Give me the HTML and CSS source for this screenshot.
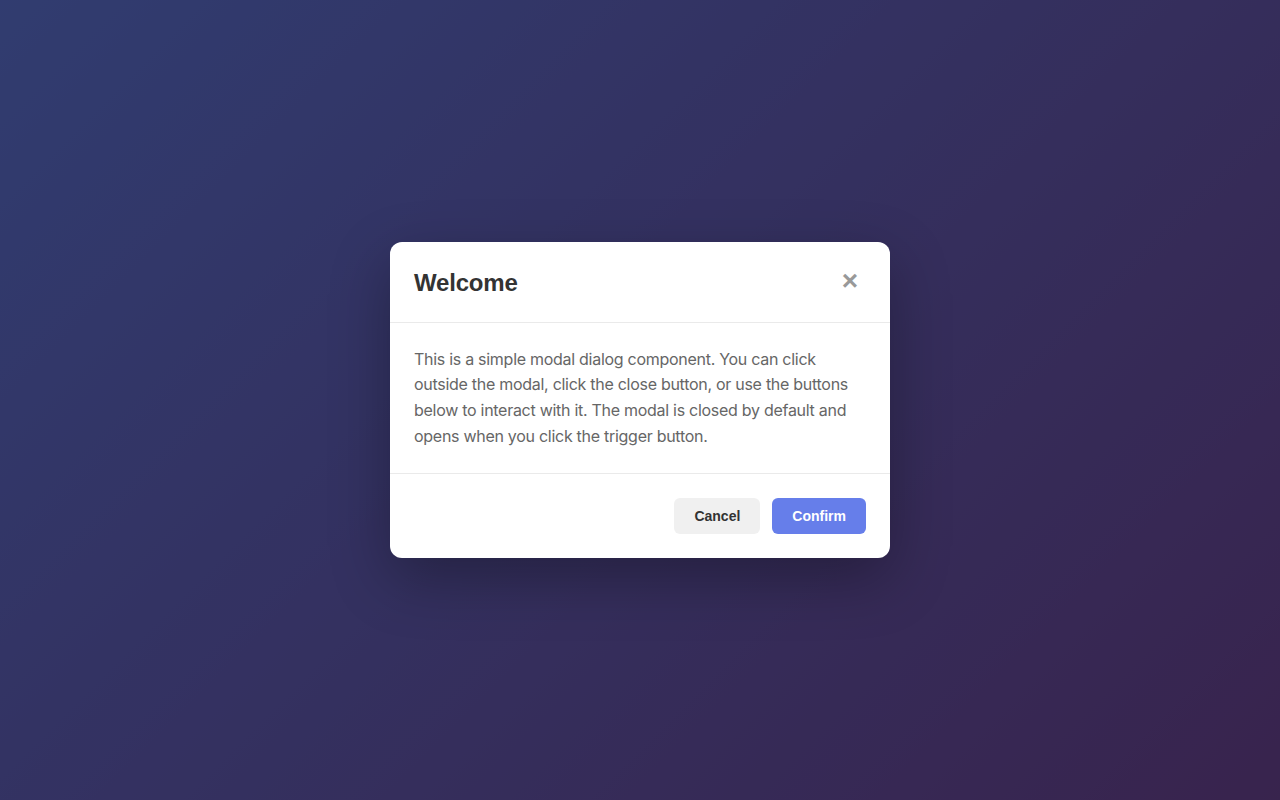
FILE: index.html
```html
<!DOCTYPE html>
<html lang="en">
<head>
<meta charset="utf-8">
<title>Modal</title>
<link rel="stylesheet" href="styles.css">
</head>
<body>
<div class="overlay">
  <div class="modal" role="dialog">
    <div class="modal-header">
      <h2 class="modal-title">Welcome</h2>
      <button class="close-btn" aria-label="Close">&times;</button>
    </div>
    <div class="modal-body">
      <p>This is a simple modal dialog component. You can click outside the modal, click the close button, or use the buttons below to interact with it. The modal is closed by default and opens when you click the trigger button.</p>
    </div>
    <div class="modal-footer">
      <button class="btn btn-cancel">Cancel</button>
      <button class="btn btn-confirm">Confirm</button>
    </div>
  </div>
</div>
</body>
</html>
```
FILE: styles.css
```css
* { box-sizing: border-box; }
html, body { margin: 0; height: 100%; }
body {
  font-family: Inter, "Liberation Sans", Arial, sans-serif;
  background: linear-gradient(135deg, #667eea 0%, #764ba2 100%);
}
.overlay {
  width: 100%;
  height: 100%;
  background: rgba(0, 0, 0, 0.52);
  display: flex;
  align-items: center;
  justify-content: center;
}
.modal {
  width: 500px;
  background: #fff;
  border-radius: 12px;
  box-shadow: 0 20px 60px rgba(0, 0, 0, 0.3);
  overflow: hidden;
}
.modal-header {
  display: flex;
  align-items: center;
  justify-content: space-between;
  padding: 24px;
  border-bottom: 1px solid #eaeaea;
}
.modal-title {
  margin: 0;
  padding-top: 1px;
  font-family: "Liberation Sans", Arial, sans-serif;
  font-size: 24px;
  line-height: 31px;
  font-weight: 700;
  color: #333;
  letter-spacing: -0.2px;
}
.close-btn {
  width: 32px;
  height: 30px;
  margin-bottom: 2px;
  border: 0;
  background: transparent;
  color: #999;
  font-size: 28px;
  line-height: 1;
  font-family: "Liberation Sans", Arial, sans-serif;
  font-weight: 700;
  padding: 0;
  display: flex;
  align-items: center;
  justify-content: center;
  cursor: pointer;
}
.modal-body {
  padding: 24px;
  border-bottom: 1px solid #eaeaea;
}
.modal-body p {
  margin: 0;
  font-size: 16px;
  line-height: 1.6;
  letter-spacing: -0.28px;
  color: #666;
}
.modal-footer {
  display: flex;
  justify-content: flex-end;
  gap: 12px;
  padding: 24px;
}
.btn {
  height: 36px;
  padding: 0 20px;
  border: 0;
  border-radius: 6px;
  font-family: "Liberation Sans", Arial, sans-serif;
  font-size: 14px;
  font-weight: 700;
  cursor: pointer;
}
.btn-cancel { background: #f0f0f0; color: #333; }
.btn-confirm { background: #667eea; color: #fff; }
```
